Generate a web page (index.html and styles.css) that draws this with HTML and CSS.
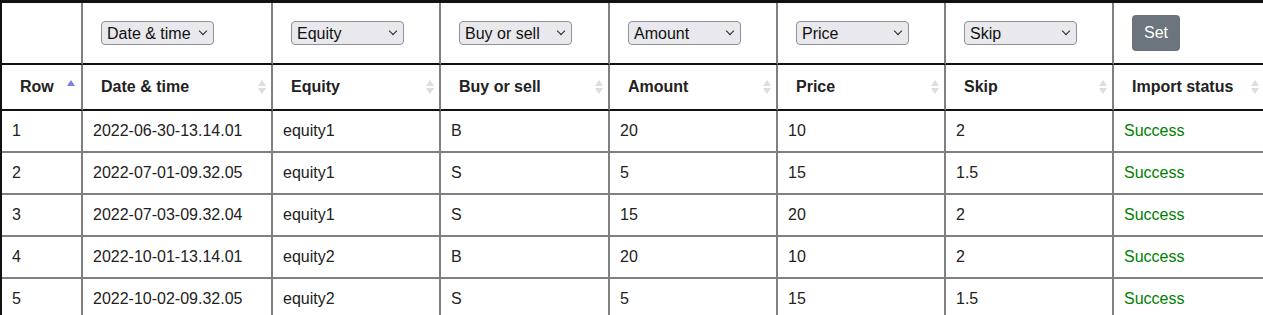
FILE: index.html
```html
<!DOCTYPE html>
<html lang="en">
<head>
    <meta charset="UTF-8">
    <meta name="viewport" content="width=device-width, initial-scale=1.0">
    <title>Import trades</title>
    <link rel="stylesheet" href="styles.css">
</head>
<body>
    <table class="import-table" id="importTable">
        <colgroup>
            <col class="col-row">
            <col class="col-date">
            <col class="col-std">
            <col class="col-wide">
            <col class="col-std">
            <col class="col-std">
            <col class="col-std">
            <col class="col-status">
        </colgroup>
        <thead>
            <tr class="filter-row">
                <th></th>
                <th><span class="select-wrap"><select class="col-select"><option selected>Date &amp; time</option><option>Equity</option><option>Buy or sell</option><option>Amount</option><option>Price</option><option>Skip</option></select></span></th>
                <th><span class="select-wrap"><select class="col-select"><option>Date &amp; time</option><option selected>Equity</option><option>Buy or sell</option><option>Amount</option><option>Price</option><option>Skip</option></select></span></th>
                <th><span class="select-wrap"><select class="col-select"><option>Date &amp; time</option><option>Equity</option><option selected>Buy or sell</option><option>Amount</option><option>Price</option><option>Skip</option></select></span></th>
                <th><span class="select-wrap"><select class="col-select"><option>Date &amp; time</option><option>Equity</option><option>Buy or sell</option><option selected>Amount</option><option>Price</option><option>Skip</option></select></span></th>
                <th><span class="select-wrap"><select class="col-select"><option>Date &amp; time</option><option>Equity</option><option>Buy or sell</option><option>Amount</option><option selected>Price</option><option>Skip</option></select></span></th>
                <th><span class="select-wrap"><select class="col-select"><option>Date &amp; time</option><option>Equity</option><option>Buy or sell</option><option>Amount</option><option>Price</option><option selected>Skip</option></select></span></th>
                <th><button class="set-btn">Set</button></th>
            </tr>
            <tr class="title-row">
                <th class="sorting sorting-asc">Row</th>
                <th class="sorting">Date &amp; time</th>
                <th class="sorting">Equity</th>
                <th class="sorting">Buy or sell</th>
                <th class="sorting">Amount</th>
                <th class="sorting">Price</th>
                <th class="sorting">Skip</th>
                <th class="sorting">Import status</th>
            </tr>
        </thead>
        <tbody>
            <tr><td>1</td><td>2022-06-30-13.14.01</td><td>equity1</td><td>B</td><td>20</td><td>10</td><td>2</td><td class="status-ok">Success</td></tr>
            <tr><td>2</td><td>2022-07-01-09.32.05</td><td>equity1</td><td>S</td><td>5</td><td>15</td><td>1.5</td><td class="status-ok">Success</td></tr>
            <tr><td>3</td><td>2022-07-03-09.32.04</td><td>equity1</td><td>S</td><td>15</td><td>20</td><td>2</td><td class="status-ok">Success</td></tr>
            <tr><td>4</td><td>2022-10-01-13.14.01</td><td>equity2</td><td>B</td><td>20</td><td>10</td><td>2</td><td class="status-ok">Success</td></tr>
            <tr><td>5</td><td>2022-10-02-09.32.05</td><td>equity2</td><td>S</td><td>5</td><td>15</td><td>1.5</td><td class="status-ok">Success</td></tr>
        </tbody>
    </table>
</body>
</html>
```

FILE: styles.css
```css
html, body {
    overflow: hidden;
}

body {
    margin: 0;
    font-family: "Liberation Sans", Arial, sans-serif;
    font-size: 16px;
    color: #222;
    background-color: #fff;
}

.import-table {
    table-layout: fixed;
    width: 1266px;
    border-collapse: separate;
    border-spacing: 0;
    border-top: 3px solid #111;
    border-left: 2px solid #111;
}

.col-row { width: 81px; }
.col-date { width: 190px; }
.col-std { width: 168px; }
.col-wide { width: 169px; }
.col-status { width: 152px; }

.import-table th,
.import-table td {
    border-right: 2px solid #808080;
    border-bottom: 2px solid #808080;
    text-align: left;
    white-space: nowrap;
}

.import-table th {
    border-bottom-color: #111;
    font-weight: bold;
    position: relative;
}

.filter-row th {
    height: 60px;
    padding: 0 18px;
    vertical-align: middle;
}

.title-row th {
    padding: 10px 18px;
    line-height: 24px;
}

.import-table td {
    padding: 8px 10px;
    line-height: 24px;
}

/* select box with chevron */
.select-wrap {
    position: relative;
    display: inline-block;
    vertical-align: middle;
}

.select-wrap::after {
    content: "";
    position: absolute;
    right: 8px;
    top: 7px;
    width: 5px;
    height: 5px;
    border-right: 1.6px solid #222;
    border-bottom: 1.6px solid #222;
    transform: rotate(45deg);
    pointer-events: none;
}

.col-select {
    display: block;
    width: 113px;
    height: 24px;
    padding: 0 20px 0 5px;
    font-family: "Liberation Sans", Arial, sans-serif;
    font-size: 16px;
    color: #111;
    background-color: #e9e9ed;
    border: 1px solid #8f8f9d;
    border-radius: 4px;
    -webkit-appearance: none;
    appearance: none;
}

.set-btn {
    display: inline-block;
    vertical-align: middle;
    padding: 6px 12px;
    font-family: "Liberation Sans", Arial, sans-serif;
    font-size: 16px;
    line-height: 1.5;
    color: #fff;
    background-color: #6c757d;
    border: none;
    border-radius: 4px;
    cursor: pointer;
}

/* sort arrows */
.sorting::before,
.sorting::after {
    content: "";
    position: absolute;
    right: 5px;
    border-left: 4px solid transparent;
    border-right: 4px solid transparent;
}

.sorting::before {
    top: calc(50% - 7px);
    border-bottom: 6px solid #dcdcdc;
}

.sorting::after {
    top: calc(50% + 1px);
    border-top: 6px solid #dcdcdc;
}

.sorting-asc::before {
    right: 6px;
    border-bottom-color: #7f7fdf;
}

.sorting-asc::after {
    display: none;
}

.status-ok {
    color: #008000;
}
```
